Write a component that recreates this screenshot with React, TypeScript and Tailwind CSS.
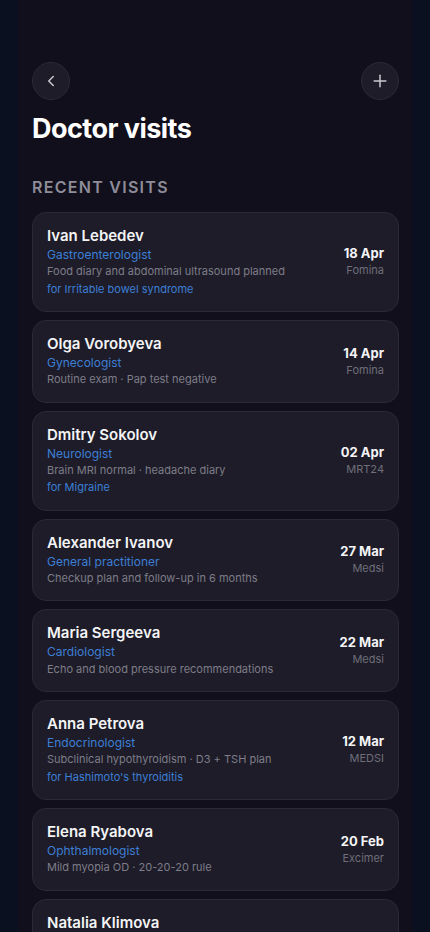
import React from "react";
import { ChevronLeft, Plus } from "lucide-react";

type Visit = {
  name: string;
  spec: string;
  note: string;
  cond?: string;
  date: string;
  place: string;
};

const visits: Visit[] = [
  { name: "Ivan Lebedev", spec: "Gastroenterologist", note: "Food diary and abdominal ultrasound planned", cond: "for Irritable bowel syndrome", date: "18 Apr", place: "Fomina" },
  { name: "Olga Vorobyeva", spec: "Gynecologist", note: "Routine exam · Pap test negative", date: "14 Apr", place: "Fomina" },
  { name: "Dmitry Sokolov", spec: "Neurologist", note: "Brain MRI normal · headache diary", cond: "for Migraine", date: "02 Apr", place: "MRT24" },
  { name: "Alexander Ivanov", spec: "General practitioner", note: "Checkup plan and follow-up in 6 months", date: "27 Mar", place: "Medsi" },
  { name: "Maria Sergeeva", spec: "Cardiologist", note: "Echo and blood pressure recommendations", date: "22 Mar", place: "Medsi" },
  { name: "Anna Petrova", spec: "Endocrinologist", note: "Subclinical hypothyroidism · D3 + TSH plan", cond: "for Hashimoto's thyroiditis", date: "12 Mar", place: "MEDSI" },
  { name: "Elena Ryabova", spec: "Ophthalmologist", note: "Mild myopia OD · 20-20-20 rule", date: "20 Feb", place: "Excimer" },
  { name: "Natalia Klimova", spec: "Dermatologist", note: "Skin check · daily SPF and emollients", cond: "for Atopic dermatitis", date: "08 Feb", place: "Medsi" },
];

function Card({ v }: { v: Visit }) {
  return (
    <div className="flex items-center rounded-[14px] border border-[#2a2936] bg-[#1d1c28] px-[14px] py-[13px]">
      <div className="flex min-w-0 flex-1 flex-col">
        <div className="text-[15px] font-semibold leading-[20px] text-[#f4f4f6]">{v.name}</div>
        <div className="text-[12px] leading-[17.33px] text-[#3d7fd6]">{v.spec}</div>
        <div className="text-[11px] leading-[17.33px] text-[#7e7d89]">{v.note}</div>
        {v.cond && <div className="text-[11px] leading-[17.33px] text-[#3d7fd6]">{v.cond}</div>}
      </div>
      <div className="ml-3 flex shrink-0 flex-col items-end">
        <div className="text-[13px] font-bold leading-[17px] text-[#f4f4f6]">{v.date}</div>
        <div className="text-[11px] leading-[16px] text-[#6f6e7a]">{v.place}</div>
      </div>
    </div>
  );
}

export default function App() {
  return (
    <div className="min-h-[932px] w-full bg-[#0a1020]" style={{ fontFamily: "Inter, 'Noto Sans', sans-serif" }}>
      <div className="mx-auto min-h-[932px] w-full max-w-[394px] bg-[#110f1b] px-[14px] pt-[62px] pb-8">
        <div className="flex items-center justify-between">
          <button className="flex h-[38px] w-[38px] items-center justify-center rounded-full border border-[#2a2936] bg-[#1d1c28] text-[#c8c8d0]">
            <ChevronLeft size={18} strokeWidth={2} />
          </button>
          <button className="mr-[-1px] flex h-[38px] w-[38px] items-center justify-center rounded-full border border-[#2a2936] bg-[#1d1c28] text-[#c8c8d0]">
            <Plus size={20} strokeWidth={1.8} />
          </button>
        </div>
        <h1 className="mt-[12px] text-[27px] font-bold leading-[34px] tracking-[-0.02em] text-white">Doctor visits</h1>
        <div className="mt-[31px] text-[16px] font-semibold uppercase leading-[20px] tracking-[0.08em] text-[#8e8d99]">Recent visits</div>
        <div className="mt-[15px] mr-[-1px] flex flex-col gap-2">
          {visits.map((v) => (
            <Card key={v.name} v={v} />
          ))}
        </div>
      </div>
    </div>
  );
}
